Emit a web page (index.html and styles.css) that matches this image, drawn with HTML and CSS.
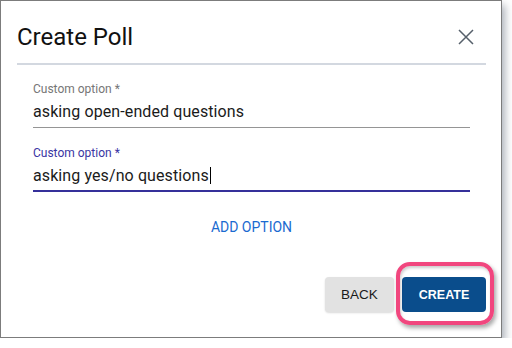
FILE: index.html
```html
<!DOCTYPE html>
<html>
<head>
<meta charset="utf-8">
<link rel="stylesheet" href="styles.css">
</head>
<body>
<div class="dialog">
  <div class="header">
    <h1 class="title">Create Poll</h1>
    <button class="close" aria-label="Close">
      <svg width="16" height="16" viewBox="0 0 16 16"><path d="M1 1L15 15M15 1L1 15" stroke="#56606b" stroke-width="1.5" fill="none"/></svg>
    </button>
  </div>
  <div class="divider"></div>
  <div class="content">
    <div class="field">
      <div class="label">Custom option *</div>
      <div class="input">asking open-ended questions</div>
    </div>
    <div class="field focused">
      <div class="label">Custom option *</div>
      <div class="input">asking yes/no questions<span class="caret"></span></div>
    </div>
    <div class="add-row"><button class="add">ADD OPTION</button></div>
  </div>
  <div class="actions">
    <button class="btn back">BACK</button>
    <div class="create-wrap">
      <button class="btn create">CREATE</button>
      <div class="ring"></div>
    </div>
  </div>
</div>
</body>
</html>
```

FILE: styles.css
```css
html, body {
  margin: 0;
  padding: 0;
  background: #ffffff;
}

.dialog {
  box-sizing: border-box;
  width: 502px;
  height: 338px;
  border: 1px solid #7c7c7c;
  background: #fff;
  box-shadow: 3px 5px 8px rgba(90, 100, 115, 0.5);
  display: flex;
  flex-direction: column;
  font-family: Roboto, "Liberation Sans", sans-serif;
}

.header {
  display: flex;
  justify-content: space-between;
  align-items: flex-start;
  padding: 22px 27px 0 16px;
}

.title {
  margin: 0;
  font-size: 24px;
  line-height: 28px;
  font-weight: 400;
  color: #111;
}

.close {
  border: 0;
  background: none;
  padding: 0;
  margin-top: 6px;
  width: 16px;
  height: 16px;
  display: block;
}
.close svg { display: block; }

.divider {
  height: 2px;
  background: #d3d8e0;
  margin: 12px 15px 0 16px;
}

.content {
  padding: 17px 31px 0 32px;
  display: flex;
  flex-direction: column;
}

.field {
  display: flex;
  flex-direction: column;
  margin-bottom: 18px;
}

.label {
  font-size: 12px;
  line-height: 14px;
  color: #767676;
}

.input {
  margin-top: 6px;
  font-size: 16px;
  line-height: 19px;
  color: #1b1b1b;
  padding-bottom: 6px;
  border-bottom: 1px solid #959595;
  letter-spacing: 0.1px;
}

.focused .label { color: #3a35a3; }
.focused .input {
  padding-bottom: 5px;
  border-bottom: 2px solid #35309a;
}

.caret {
  display: inline-block;
  width: 1px;
  height: 17px;
  background: #000;
  vertical-align: -3px;
  margin-left: 1px;
}

.add-row {
  display: flex;
  justify-content: center;
  margin-top: 9px;
}

.add {
  border: 0;
  background: none;
  padding: 0;
  font-family: Roboto, "Liberation Sans", sans-serif;
  font-size: 14px;
  line-height: 16px;
  font-weight: 400;
  color: #1a6ad0;
}

.actions {
  display: flex;
  justify-content: flex-end;
  gap: 8px;
  padding-right: 15px;
  margin-top: 42px;
}

.btn {
  height: 35px;
  border: 0;
  border-radius: 4px;
  font-family: "Liberation Sans", Arial, sans-serif;
  padding: 0;
}

.back {
  width: 69px;
  background: #e2e2e2;
  color: #1a1a1a;
  font-size: 13.5px;
  box-shadow: 0 1px 2px rgba(0,0,0,0.15);
}

.create-wrap {
  position: relative;
}

.create {
  width: 84px;
  background: #0a4d8c;
  color: #fff;
  font-size: 12.5px;
  font-weight: 700;
  display: block;
}

.ring {
  position: absolute;
  left: -6px;
  right: -8px;
  top: -15px;
  bottom: -13px;
  border: 4px solid #f1467e;
  border-radius: 14px;
  box-shadow: 2px 3px 4px rgba(0,0,0,0.35), inset 1px 2px 3px rgba(0,0,0,0.2);
  pointer-events: none;
}
```
